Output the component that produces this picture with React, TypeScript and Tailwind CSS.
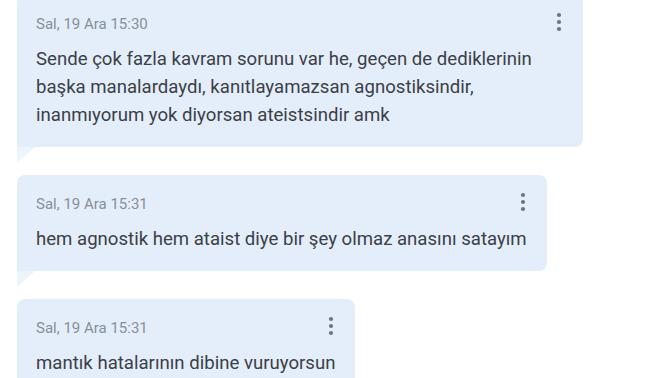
const messages = [
  {
    time: "Sal, 19 Ara 15:30",
    text: "Sende çok fazla kavram sorunu var he, geçen de dediklerinin başka manalardaydı, kanıtlayamazsan agnostiksindir, inanmıyorum yok diyorsan ateistsindir amk",
    width: "w-[566px]",
  },
  {
    time: "Sal, 19 Ara 15:31",
    text: "hem agnostik hem ataist diye bir şey olmaz anasını satayım",
    width: "w-fit",
  },
  {
    time: "Sal, 19 Ara 15:31",
    text: "mantık hatalarının dibine vuruyorsun",
    width: "w-fit",
  },
];

const Kebab = () => (
  <svg width="8" height="20" viewBox="0 0 8 20" className="shrink-0 -mt-[5px]">
    <circle cx="4" cy="3" r="2.1" fill="#6e747b" />
    <circle cx="4" cy="10" r="2.1" fill="#6e747b" />
    <circle cx="4" cy="17" r="2.1" fill="#6e747b" />
  </svg>
);

const Bubble = ({ time, text, width }: { time: string; text: string; width: string }) => (
  <div className={`relative ${width} max-w-[566px]`}>
    <div className="rounded-lg rounded-bl-none bg-[#e4eefb] pl-[19px] pr-[20px] pt-[19px] pb-[18px]">
      <div className="flex items-center justify-between gap-6 h-5">
        <span className="text-[15px] leading-5 text-[#878e96]">{time}</span>
        <Kebab />
      </div>
      <p className="mt-[11px] text-[18.6px] leading-7 text-[#3b4046]">{text}</p>
    </div>
    <svg className="absolute left-0 top-full" width="18" height="16" viewBox="0 0 18 16">
      <polygon points="0,0 18,0 0,16" fill="#eef4fc" />
    </svg>
  </div>
);

export default function App() {
  return (
    <div
      className="w-[672px] h-[378px] overflow-hidden bg-white pl-[17px]"
      style={{ fontFamily: "Roboto, 'Noto Sans', sans-serif" }}
    >
      <div className="-mt-[5px] flex flex-col gap-[28px]">
        {messages.map((m, i) => (
          <Bubble key={i} {...m} />
        ))}
      </div>
    </div>
  );
}
